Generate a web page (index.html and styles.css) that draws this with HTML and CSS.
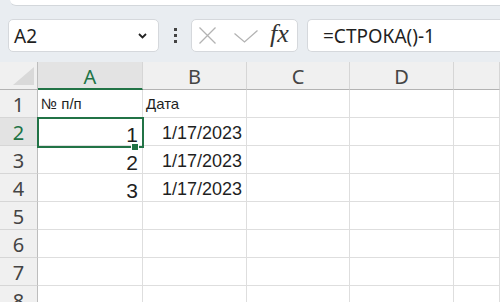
FILE: index.html
```html
<!DOCTYPE html>
<html>
<head>
  <meta charset="UTF-8">
  <title>Sheet</title>
  <link rel="stylesheet" href="styles.css">
</head>
<body>
  <div class="ribbon-edge"></div>

  <div class="formula-bar">
    <div class="name-box">
      <span class="name-value">A2</span>
      <svg class="chevron" width="9" height="6" viewBox="0 0 9 6">
        <polyline points="1,1 4.5,4.5 8,1" fill="none" stroke="#222" stroke-width="1.8"/>
      </svg>
    </div>
    <div class="bar-dots"><span></span><span></span><span></span></div>
    <div class="edit-buttons">
      <svg class="icon-cancel" width="17" height="17" viewBox="0 0 17 17">
        <path d="M0.5 0.5 L16.5 16.5 M16.5 0.5 L0.5 16.5" stroke="#b3b3b3" stroke-width="1.3" fill="none"/>
      </svg>
      <svg class="icon-enter" width="24" height="13" viewBox="0 0 24 13">
        <polyline points="0.5,3.5 10.5,12 23.5,0.5" stroke="#b3b3b3" stroke-width="1.3" fill="none"/>
      </svg>
      <span class="fx">fx</span>
    </div>
    <div class="formula-input">=СТРОКА()-1</div>
  </div>

  <div class="sheet">
    <div class="corner">
      <svg width="21" height="18" viewBox="0 0 21 18"><polygon points="0,18 21,18 21,0" fill="#d9d9d9"/></svg>
    </div>
    <div class="col-head active">A</div>
    <div class="col-head">B</div>
    <div class="col-head">C</div>
    <div class="col-head">D</div>
    <div class="col-head"></div>

    <div class="row-head">1</div>
    <div class="cell small">№ п/п</div>
    <div class="cell small">Дата</div>
    <div class="cell"></div>
    <div class="cell"></div>
    <div class="cell"></div>

    <div class="row-head active">2</div>
    <div class="cell num">1</div>
    <div class="cell date">1/17/2023</div>
    <div class="cell"></div>
    <div class="cell"></div>
    <div class="cell"></div>

    <div class="row-head">3</div>
    <div class="cell num">2</div>
    <div class="cell date">1/17/2023</div>
    <div class="cell"></div>
    <div class="cell"></div>
    <div class="cell"></div>

    <div class="row-head">4</div>
    <div class="cell num">3</div>
    <div class="cell date">1/17/2023</div>
    <div class="cell"></div>
    <div class="cell"></div>
    <div class="cell"></div>

    <div class="row-head">5</div>
    <div class="cell"></div>
    <div class="cell"></div>
    <div class="cell"></div>
    <div class="cell"></div>
    <div class="cell"></div>

    <div class="row-head">6</div>
    <div class="cell"></div>
    <div class="cell"></div>
    <div class="cell"></div>
    <div class="cell"></div>
    <div class="cell"></div>

    <div class="row-head">7</div>
    <div class="cell"></div>
    <div class="cell"></div>
    <div class="cell"></div>
    <div class="cell"></div>
    <div class="cell"></div>

    <div class="row-head">8</div>
    <div class="cell"></div>
    <div class="cell"></div>
    <div class="cell"></div>
    <div class="cell"></div>
    <div class="cell"></div>

    <div class="selection"></div>
    <div class="fill-handle"></div>
  </div>
</body>
</html>
```

FILE: styles.css
```css
body {
  margin: 0;
  width: 500px;
  height: 302px;
  overflow: hidden;
  background: #e9edf1;
  font-family: 'Noto Sans', 'Open Sans', sans-serif;
  color: #222;
}

.ribbon-edge {
  margin-left: 10px;
  height: 5px;
  background: #fff;
  border-bottom: 1px solid #d3d7db;
  border-bottom-left-radius: 7px;
}

.formula-bar {
  display: flex;
  align-items: center;
  padding: 13px 0 0 8px;
  margin-bottom: 10px;
  height: 33px;
}

.name-box {
  box-sizing: border-box;
  width: 151px;
  height: 33px;
  flex-shrink: 0;
  display: flex;
  align-items: center;
  justify-content: space-between;
  padding: 0 11px 0 5px;
  background: #fff;
  border: 1px solid #d5d8dc;
  border-radius: 5px;
}

.name-value {
  font-size: 19px;
  color: #1f1f1f;
}

.chevron {
  margin-top: 1px;
}

.bar-dots {
  display: flex;
  flex-direction: column;
  gap: 3px;
  margin-left: 15px;
  flex-shrink: 0;
}

.bar-dots span {
  width: 3px;
  height: 3px;
  background: #444;
}

.edit-buttons {
  box-sizing: border-box;
  width: 107px;
  height: 33px;
  flex-shrink: 0;
  margin-left: 14px;
  display: flex;
  align-items: center;
  padding-left: 7px;
  background: #fff;
  border: 1px solid #d5d8dc;
  border-radius: 5px;
}

.icon-enter {
  margin-left: 18px;
  margin-top: 1px;
}

.fx {
  margin-left: 12px;
  font-family: 'Liberation Serif', serif;
  font-style: italic;
  font-size: 26px;
  color: #333;
  margin-top: -3px;
}

.formula-input {
  box-sizing: border-box;
  flex: 1;
  min-width: 0;
  height: 33px;
  margin-left: 9px;
  display: flex;
  align-items: center;
  padding-left: 15px;
  font-size: 19px;
  color: #1f1f1f;
  background: #fff;
  border: 1px solid #d5d8dc;
  border-right: none;
  border-radius: 5px 0 0 5px;
}

/* grid */

.sheet {
  position: relative;
  display: grid;
  grid-template-columns: 38px 105px 104px 103px 104px 1fr;
  grid-auto-rows: 28px;
  background: #fff;
}

.corner,
.col-head,
.row-head,
.cell {
  box-sizing: border-box;
}

.corner {
  background: #f0f0f0;
  border-right: 1px solid #bdbdbd;
  border-bottom: 1px solid #b3b3b3;
  display: flex;
  align-items: flex-end;
  justify-content: flex-end;
  padding: 0 3px 4px 0;
}

.col-head {
  background: #f0f0f0;
  border-right: 1px solid #d6d6d6;
  border-bottom: 1px solid #b3b3b3;
  display: flex;
  align-items: center;
  justify-content: center;
  padding-top: 2px;
  font-size: 20px;
  color: #444;
}

.col-head.active {
  background: #e3e3e3;
  color: #217346;
  border-bottom: 2px solid #217346;
}

.row-head {
  background: #f0f0f0;
  border-right: 1px solid #bdbdbd;
  border-bottom: 1px solid #d6d6d6;
  display: flex;
  align-items: center;
  justify-content: center;
  padding-top: 2px;
  font-size: 20px;
  color: #444;
}

.row-head.active {
  background: #e3e3e3;
  color: #217346;
}

.cell {
  border-right: 1px solid #dedede;
  border-bottom: 1px solid #dedede;
  display: flex;
  align-items: flex-end;
  font-family: 'Liberation Sans', Arial, sans-serif;
  line-height: 1;
  color: #1f1f1f;
  padding: 0 4px;
}

.cell.small {
  font-size: 15px;
  padding-bottom: 6px;
  padding-left: 3px;
}

.cell.date {
  font-size: 18px;
  justify-content: flex-end;
  padding-bottom: 3px;
}

.cell.num {
  font-size: 21px;
  justify-content: flex-end;
  padding-bottom: 0;
}

.selection {
  position: absolute;
  left: 37px;
  top: 55px;
  width: 107px;
  height: 31px;
  box-sizing: border-box;
  border: 2px solid #217346;
}

.fill-handle {
  position: absolute;
  left: 131px;
  top: 81px;
  width: 6px;
  height: 6px;
  background: #217346;
  border: 1px solid #fff;
}
```
